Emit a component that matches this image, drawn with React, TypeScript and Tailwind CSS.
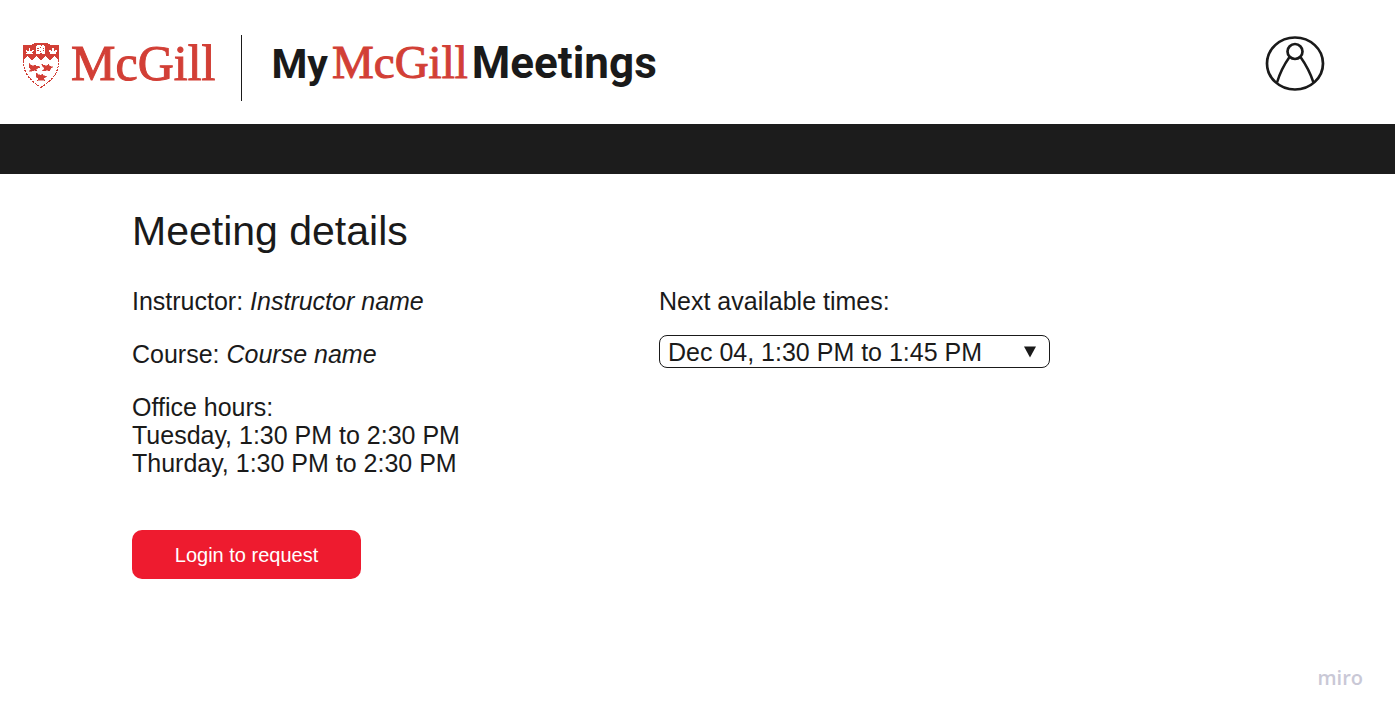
const RED = "#d23f36";

function Crest() {
  return (
    <svg
      className="h-[45px] w-9 shrink-0"
      viewBox="39 54 108 135"
      shapeRendering="crispEdges"
      role="img"
      aria-label="Crest"
    >
      <path
        fill={RED}
        d="M39 60 Q66 62 75 54 H111 Q120 62 147 60 V106 L134 93 L121 106 L107 93 L93 106 L79 93 L66 106 L53 93 L39 106 Z"
      />
      <path
        fill="none"
        stroke={RED}
        strokeWidth="3"
        strokeDasharray="7 3"
        d="M41 106 V122 Q47 160 93 187 Q139 160 145 122 V106"
      />
      <path fill="#fff" d="M47 75 H51 L54 79 H57 V69 H61 V79 H64 L67 75 H71 V78 L67 83 H51 L47 78 Z M117 75 H121 L124 79 H127 V69 H131 V79 H134 L137 75 H141 V78 L137 83 H121 L117 78 Z" />
      <path fill="#fff" d="M48 85 H70 V88 H48 Z M119 85 H139 V88 H119 Z" />
      <path fill="#fff" d="M78 62 L90 60 L93 63 L96 60 L105 62 V88 L93 85 L78 88 Z" />
      <path stroke={RED} strokeWidth="3" d="M92 65 V69 M92 77 V81 M82 69.500 H86 M82 77.500 H86 M98 69.500 H102 M98 77.500 H102" />
      <g fill={RED} stroke={RED} strokeWidth="1.5">
        <path d="M57 115 L62 120 L70 123 L75 119 L78 124 L87 123 L90 127 L82 130 L79 134 L82 138 L73 136 L66 138 H58 L63 133 L58 128 Z" />
        <path d="M95 117 L102 121 L110 123 L116 118 L119 124 L129 126 L122 130 L119 137 L111 136 L104 138 L97 137 L103 132 Z" />
        <path d="M78 143 L84 148 L92 151 L97 147 L100 152 L111 155 L103 158 L101 163 L106 167 L95 165 L82 167 L86 161 L79 156 Z" />
      </g>
    </svg>
  );
}

function ProfileIcon() {
  return (
    <svg className="h-[56px] w-[60px]" viewBox="0 0 60 56" fill="none" stroke="#1a1a1a" aria-hidden="true">
      <ellipse cx="30" cy="28.5" rx="28" ry="26" strokeWidth="2.7" />
      <circle cx="30" cy="16.5" r="7.5" strokeWidth="2.7" />
      <path strokeWidth="2.5" d="M24.5 22 Q16 34 12 47.5 M35.5 22 Q44 34 48.5 47.5" />
    </svg>
  );
}

export default function App() {
  return (
    <div className="flex min-h-screen flex-col bg-white font-['Liberation_Sans',Arial,sans-serif] text-[25px] leading-7 text-[#1a1a1a]">
      <header className="flex h-[124px] items-start justify-between pl-[23px] pr-[70px]">
        <div className="flex items-start">
          <a href="#" className="flex items-start gap-3 pt-[43px]">
            <Crest />
            <span className="font-['Liberation_Serif',serif] text-[50px] leading-10 text-[#d23f36] [-webkit-text-stroke:1px_#d23f36]">
              McGill
            </span>
          </a>
          <div className="ml-[26px] mt-[35px] h-[66px] w-px bg-[#1a1a1a]" />
          <h1 className="ml-[29px] flex items-baseline gap-1 pt-[36px] font-['Roboto',sans-serif] text-[44px] font-bold leading-[52px]">
            <span className="text-[41px]">My</span>
            <span className="font-['Liberation_Serif',serif] text-[47px] font-normal text-[#d23f36] [-webkit-text-stroke:1px_#d23f36]">
              McGill
            </span>
            <span>Meetings</span>
          </h1>
        </div>
        <button type="button" aria-label="Profile" className="mt-[35px]">
          <ProfileIcon />
        </button>
      </header>
      <nav className="h-[50px] bg-[#1c1c1c]" aria-label="Main" />
      <main className="px-[132px] pt-[33px]">
        <h2 className="text-[41px] leading-[48px]">Meeting details</h2>
        <div className="mt-8 grid grid-cols-[527fr_604fr]">
          <section className="flex flex-col gap-[25px]">
            <p>
              Instructor: <em>Instructor name</em>
            </p>
            <p>
              Course: <em>Course name</em>
            </p>
            <div>
              <p>Office hours:</p>
              <p>Tuesday, 1:30 PM to 2:30 PM</p>
              <p>Thurday, 1:30 PM to 2:30 PM</p>
            </div>
          </section>
          <section>
            <label htmlFor="time" className="block">
              Next available times:
            </label>
            <div className="mt-5 grid max-w-[391px] items-center">
              <select
                id="time"
                className="col-start-1 row-start-1 h-[33px] w-full appearance-none rounded-lg border border-[#1a1a1a] bg-white px-2 leading-7"
              >
                <option>Dec 04, 1:30 PM to 1:45 PM</option>
              </select>
              <svg
                className="pointer-events-none col-start-1 row-start-1 mr-3.5 h-3 w-3 justify-self-end"
                viewBox="0 0 12 12"
                aria-hidden="true"
              >
                <path d="M0 0.5 H12 L6 11.5 Z" fill="#1a1a1a" />
              </svg>
            </div>
          </section>
        </div>
        <button type="button" className="mt-[53px] h-[49px] w-[229px] rounded-[10px] bg-[#ee1b2f] text-[20px] text-white">
          Login to request
        </button>
      </main>
      <footer className="mt-auto flex justify-end pb-6 pr-8">
        <span className="font-['Open_Sans',sans-serif] text-[20px] font-semibold leading-7 text-[#c9c8d6]">miro</span>
      </footer>
    </div>
  );
}
